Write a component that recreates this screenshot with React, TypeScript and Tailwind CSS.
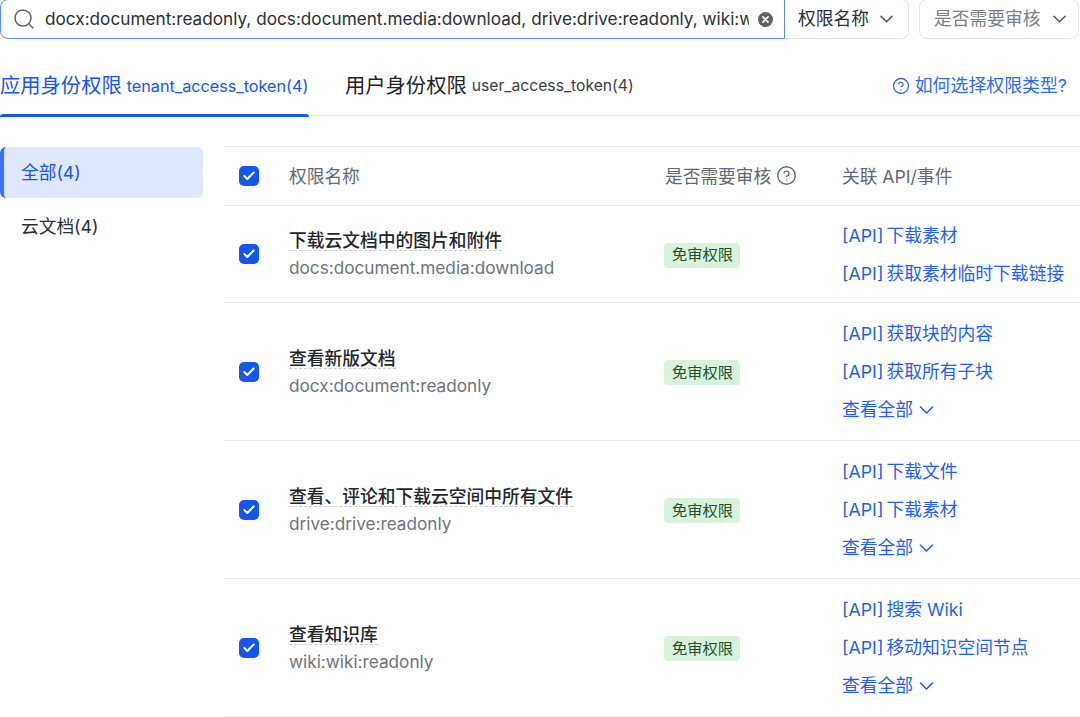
import { Search, CircleHelp, Check } from 'lucide-react';

interface ScopeRow {
  title: string;
  scope: string;
  links: string[];
  more: boolean;
  height: string;
}

const rows: ScopeRow[] = [
  {
    title: '下载云文档中的图片和附件',
    scope: 'docs:document.media:download',
    links: ['下载素材', '获取素材临时下载链接'],
    more: false,
    height: 'h-[97px]',
  },
  {
    title: '查看新版文档',
    scope: 'docx:document:readonly',
    links: ['获取块的内容', '获取所有子块'],
    more: true,
    height: 'h-[138px]',
  },
  {
    title: '查看、评论和下载云空间中所有文件',
    scope: 'drive:drive:readonly',
    links: ['下载文件', '下载素材'],
    more: true,
    height: 'h-[138px]',
  },
  {
    title: '查看知识库',
    scope: 'wiki:wiki:readonly',
    links: ['搜索 Wiki', '移动知识空间节点'],
    more: true,
    height: 'h-[138px]',
  },
];

function Checkbox() {
  return (
    <div className="flex h-5 w-5 items-center justify-center rounded-[5px] bg-[#1456f0]">
      <Check className="h-3.5 w-3.5 text-white" strokeWidth={3.5} />
    </div>
  );
}

function Chevron({ className }: { className: string }) {
  return (
    <svg className={className} viewBox="0 0 14 8" fill="none" stroke="currentColor" strokeWidth="1.6" strokeLinecap="round" strokeLinejoin="round">
      <path d="M1 1l6 6 6-6" />
    </svg>
  );
}

export default function App() {
  return (
    <div className="h-[717px] w-[1080px] overflow-hidden bg-white font-['Inter','Noto_Sans_CJK_SC',sans-serif] text-[#1f2329]">
      {/* Filters */}
      <div className="-mt-px flex h-10 items-start">
        <div className="flex h-10 w-[785px] items-center rounded-l-lg border border-[#5b8ff0] pl-[11px]">
          <Search className="h-6 w-6 shrink-0 text-[#5f6368]" strokeWidth={1.5} />
          <div className="ml-[9px] w-[704px] shrink-0 overflow-hidden whitespace-nowrap text-[17.2px] text-[#2b2f36]">
            docx:document:readonly, docs:document.media:download, drive:drive:readonly, wiki:wiki:readonly
          </div>
          <svg className="ml-[9px] h-[15px] w-[15px] shrink-0" viewBox="0 0 16 16">
            <circle cx="8" cy="8" r="8" fill="#5f6368" />
            <path d="M5.3 5.3l5.4 5.4M10.7 5.3l-5.4 5.4" stroke="#fff" strokeWidth="1.8" strokeLinecap="round" />
          </svg>
        </div>
        <div className="flex h-10 w-[124px] items-center rounded-r-lg border border-l-0 border-[#e3e5e8] pl-[13px]">
          <span className="text-[17.75px] text-[#2b2f36]">权限名称</span>
          <Chevron className="ml-[11px] h-[8px] w-[13px] text-[#4e5358]" />
        </div>
        <div className="ml-[10px] flex h-10 w-[160px] items-center rounded-lg border border-[#e3e5e8] pl-[14px]">
          <span className="text-[17.75px] text-[#7b8087]">是否需要审核</span>
          <Chevron className="ml-[12px] h-[8px] w-[13px] text-[#4e5358]" />
        </div>
      </div>

      {/* Tabs */}
      <div className="mt-[20px] flex h-[57px] items-start border-b border-[#e8e9eb]">
        <div className="relative flex h-[57px] w-[309px] items-center pb-[3px] text-[#1456f0]">
          <span className="text-[20.3px]">应用身份权限</span>
          <span className="ml-[5px] text-[16.2px]">tenant_access_token(4)</span>
          <div className="absolute bottom-[-1px] left-0 h-[3px] w-full rounded-t-sm bg-[#1456f0]" />
        </div>
        <div className="ml-[36px] flex h-[57px] items-center pb-[3px]">
          <span className="text-[20.3px]">用户身份权限</span>
          <span className="ml-[5px] text-[15.7px] text-[#3b4047]">user_access_token(4)</span>
        </div>
        <div className="ml-auto mr-[13px] flex h-[57px] items-center pb-[3px] text-[#2f6bf0]">
          <CircleHelp className="h-[18px] w-[18px]" strokeWidth={1.7} />
          <span className="ml-[5px] text-[17.9px]">如何选择权限类型?</span>
        </div>
      </div>

      <div className="mt-[30px] flex items-start">
        {/* Sidebar */}
        <div className="w-[203px] shrink-0 pt-px">
          <div className="flex h-[51px] items-center rounded-md border-l-4 border-[#3a74f2] bg-[#e0e8fc] pl-[17px] pt-[2px] text-[17.7px] text-[#1456f0]">
            全部(4)
          </div>
          <div className="flex h-[58px] items-center pl-[21px] text-[17.7px] text-[#2b2f36]">云文档(4)</div>
        </div>

        {/* Table */}
        <div className="ml-[21px] flex-1 border-t border-[#e8e9eb]">
          <div className="flex h-[59px] items-center border-b border-[#e8e9eb] text-[17.7px] text-[#646a73]">
            <div className="w-[65px] pl-[15px]">
              <Checkbox />
            </div>
            <div className="w-[376px] pt-[2px]">权限名称</div>
            <div className="flex w-[177px] items-center">
              <span className="pt-[2px]">是否需要审核</span>
              <CircleHelp className="ml-[5px] h-[21px] w-[21px]" strokeWidth={1.6} />
            </div>
            <div className="pt-[2px]">关联 API/事件</div>
          </div>
          {rows.map((row) => (
            <div key={row.scope} className={`flex items-center border-b border-[#e8e9eb] ${row.height}`}>
              <div className="w-[65px] pl-[15px]">
                <Checkbox />
              </div>
              <div className="w-[375px]">
                <div className="w-fit border-b border-dashed border-[#c9cdd2] pt-[3px] text-[17.75px] font-medium leading-[19px] text-[#23272d]">
                  {row.title}
                </div>
                <div className="mt-[5px] text-[17.2px] leading-[24px] text-[#6f747c]">{row.scope}</div>
              </div>
              <div className="w-[178px] pt-[2px]">
                <span className="inline-flex h-[25px] w-[76px] items-center justify-center rounded bg-[#d9f2dc] pl-px text-[15.25px] text-[#24512b]">
                  免审权限
                </span>
              </div>
              <div className={`flex flex-col gap-[14px] text-[17.8px] leading-[24px] text-[#1f62f0] ${row.more ? '' : 'mt-[2px]'}`}>
                {row.links.map((link) => (
                  <div key={link} className="whitespace-nowrap">
                    <span className="mr-[-2px]">[API] </span>
                    {link}
                  </div>
                ))}
                {row.more && (
                  <div className="flex items-center">
                    查看全部
                    <Chevron className="ml-[6px] h-[8px] w-[15px]" />
                  </div>
                )}
              </div>
            </div>
          ))}
        </div>
      </div>
    </div>
  );
}
